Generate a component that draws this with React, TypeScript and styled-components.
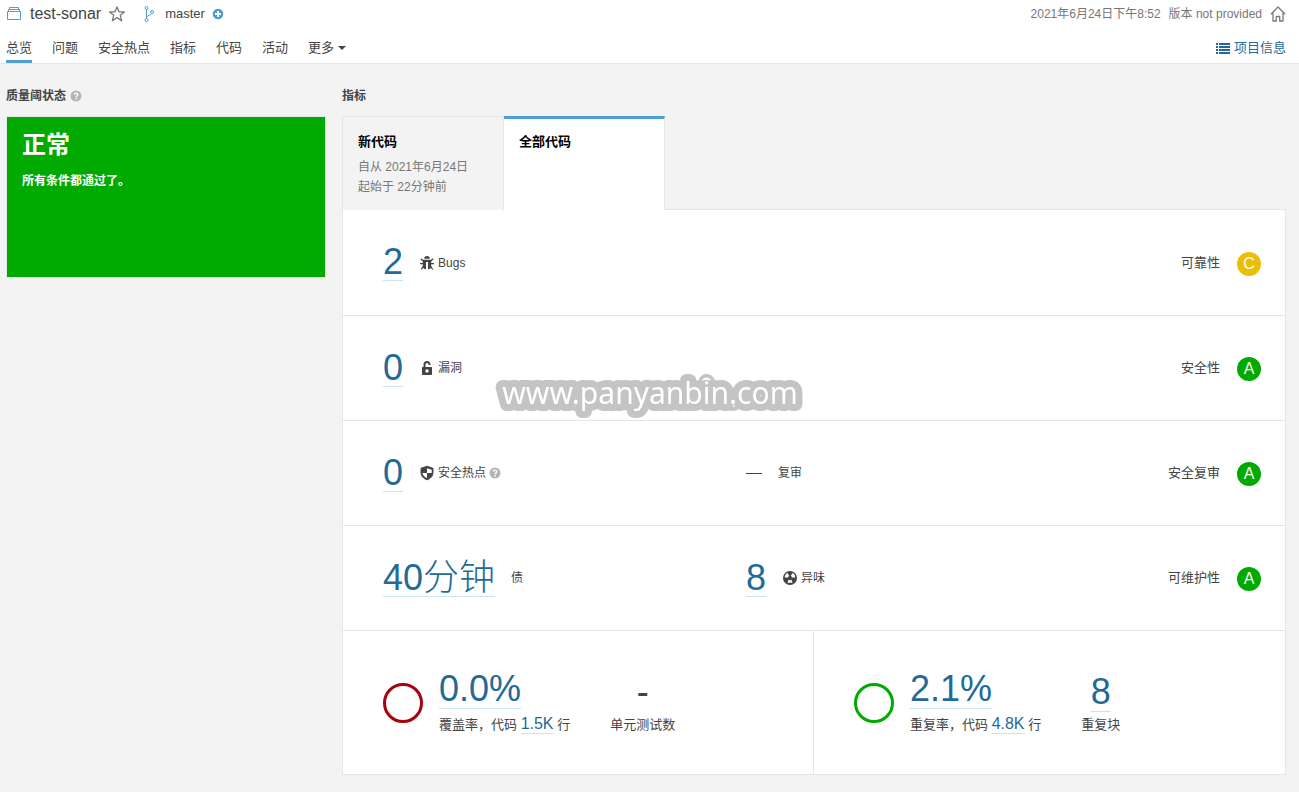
import React from 'react';
import styled, { createGlobalStyle } from 'styled-components';

const color = {
  text: '#444',
  muted: '#777',
  blue: '#4b9fd5',
  link: '#236a97',
  underline: '#cae3f2',
  border: '#e6e6e6',
  page: '#f3f3f3',
  green: '#00aa00',
  yellow: '#eabe06',
  red: '#a4030f',
  help: '#b4b4b4',
};

const Global = createGlobalStyle`
  *, *::before, *::after { box-sizing: border-box; }
  body {
    margin: 0;
    background: ${color.page};
    color: ${color.text};
    font: 13px/20px "Liberation Sans", "Noto Sans CJK SC", sans-serif;
  }
  svg { display: block; flex: none; }
  a { color: inherit; text-decoration: none; }
  h2, h3, p { margin: 0; }
  button { padding: 0; border: 0; background: none; color: inherit; font: inherit; cursor: pointer; text-align: left; }
`;

const Header = styled.header`
  background: #fff;
  border-bottom: 1px solid ${color.border};
  padding: 0 13px 0 6px;
`;

const HeaderRow = styled.div`
  display: flex;
  align-items: center;
  justify-content: space-between;
  height: 28px;
`;

const Project = styled.div`
  display: flex;
  align-items: center;
`;

const ProjectName = styled.a`
  margin: 0 8px;
  font-size: 16px;
`;

const Branch = styled.a`
  display: flex;
  align-items: center;
  gap: 8px;
  margin: 0 7px 0 16px;
`;

const Meta = styled.div`
  display: flex;
  align-items: center;
  gap: 8px;
  color: ${color.muted};
  font-size: 12px;
`;

const NavRow = styled.div`
  display: flex;
  justify-content: space-between;
  height: 35px;
`;

const Nav = styled.nav`
  display: flex;
  gap: 20px;
`;

const NavLink = styled.a<{ $active?: boolean }>`
  padding-top: 10px;
  border-bottom: 3px solid ${(p) => (p.$active ? color.blue : 'transparent')};
`;

const MoreButton = styled.button`
  display: flex;
  align-items: center;
  gap: 4px;
  height: 20px;
  margin-top: 10px;
`;

const InfoLink = styled.a`
  display: flex;
  align-items: center;
  gap: 4px;
  height: 20px;
  margin-top: 10px;
  color: ${color.link};
`;

const Main = styled.main`
  display: grid;
  grid-template-columns: 320px minmax(0, 1fr);
  gap: 16px;
  padding: 22px 13px 16px 6px;
`;

const Heading = styled.h2`
  display: flex;
  align-items: center;
  gap: 4px;
  margin-bottom: 10px;
  font-size: 12px;
  line-height: 20px;
  font-weight: bold;
`;

const Gate = styled.div`
  min-height: 162px;
  padding: 12px 15px;
  border: 1px solid ${color.border};
  background: ${color.green};
  color: #fff;
  font-size: 12px;
  font-weight: bold;
`;

const GateStatus = styled.h3`
  margin-bottom: 10px;
  font-size: 24px;
  line-height: 32px;
`;

const Tabs = styled.div`
  display: flex;
  position: relative;
  margin-bottom: -1px;
`;

const Tab = styled.button<{ $active?: boolean }>`
  display: flex;
  flex-direction: column;
  width: ${(p) => (p.$active ? '161px' : '162px')};
  height: 94px;
  padding: ${(p) => (p.$active ? '13px' : '15px')} 15px 0;
  border: 1px solid ${color.border};
  border-bottom: 0;
  ${(p) =>
    p.$active
      ? `background: #fff; border-top: 3px solid ${color.blue}; border-left: 0;`
      : `background: ${color.page};`}
  color: ${color.muted};
  font-size: 12px;
`;

const TabTitle = styled.span`
  margin-bottom: 5px;
  color: #000;
  font-size: 13px;
  font-weight: bold;
`;

const Panel = styled.div`
  border: 1px solid ${color.border};
  background: #fff;
`;

const MeasureRow = styled.div`
  display: grid;
  grid-template-columns: 363px minmax(0, 1fr) auto;
  align-items: center;
  height: 105px;
  padding: 0 24px 0 40px;
  border-bottom: 1px solid ${color.border};
  &:first-child { height: 106px; }
`;

const Measure = styled.div`
  display: flex;
  align-items: center;
  gap: 16px;
  font-size: 12px;
`;

const MeasureLabel = styled.span`
  display: flex;
  align-items: center;
  gap: 3px;
`;

const BigLink = styled.a`
  border-bottom: 1px solid ${color.underline};
  color: ${color.link};
  font-size: 36px;
  line-height: 36px;
  font-weight: 300;
`;

const BigText = styled.span`
  border-bottom: 1px solid transparent;
  font-size: 36px;
  line-height: 36px;
`;

const SmallLink = styled.a`
  display: inline-block;
  border-bottom: 1px solid ${color.underline};
  color: ${color.link};
  font-size: 16px;
  line-height: 18px;
`;

const Dash = styled.span`
  width: 16px;
  height: 1px;
  background: ${color.text};
`;

const Rating = styled.div`
  display: flex;
  align-items: flex-start;
  gap: 17px;
  grid-column: 3;
  padding-top: 2px;
  line-height: 22px;
`;

const RatingBadge = styled.a<{ $color: string }>`
  width: 24px;
  height: 24px;
  border-radius: 50%;
  background: ${(p) => p.$color};
  color: #fff;
  font-size: 16px;
  line-height: 24px;
  text-align: center;
`;

const Halves = styled.div`
  display: grid;
  grid-template-columns: 1fr 1fr;
`;

const Half = styled.div`
  display: flex;
  align-items: center;
  height: 143px;
  padding-left: 40px;
  &:first-child { border-right: 1px solid ${color.border}; }
`;

const Ring = styled.span<{ $color: string }>`
  flex: none;
  width: 40px;
  height: 40px;
  margin-right: 16px;
  border: 3px solid ${(p) => p.$color};
  border-radius: 50%;
`;

const Stat = styled.div<{ $center?: boolean }>`
  display: flex;
  flex-direction: column;
  align-items: ${(p) => (p.$center ? 'center' : 'flex-start')};
  gap: ${(p) => (p.$center ? '3px' : '6px')};
  margin-right: 40px;
  padding-top: ${(p) => (p.$center ? '2px' : '0')};
  white-space: nowrap;
  ${BigLink}, ${BigText} { line-height: 38px; }
`;

const Watermark = styled.div`
  position: fixed;
  inset: 0;
  display: flex;
  align-items: center;
  justify-content: center;
  pointer-events: none;
`;

const WatermarkText = styled.text`
  fill: #fff;
  stroke: #c4c4c4;
  stroke-width: 14px;
  stroke-linejoin: round;
  paint-order: stroke fill;
  font: 30px "Noto Sans", sans-serif;
  text-anchor: middle;
`;

const ProjectIcon = () => (
  <svg width="16" height="16" viewBox="0 0 16 16" fill="none" stroke={color.blue}>
    <path d="M1.500 5.500h13v8h-13zM2.500 5.500v-2h11v2M3.500 3.500v-2h9v2" />
  </svg>
);
const StarIcon = () => (
  <svg width="16" height="16" viewBox="0 0 16 16" fill="none" stroke={color.muted} strokeWidth="1.300" strokeLinejoin="round">
    <path d="M8 .9l2.100 5h5.200l-4.100 3.300 1.500 5.600L8 11.600l-4.700 3.200 1.500-5.600L.7 5.900h5.200z" />
  </svg>
);
const BranchIcon = () => (
  <svg width="16" height="16" viewBox="0 0 16 16" fill="none" stroke={color.blue}>
    <circle cx="5.500" cy="2" r="1.500" />
    <circle cx="5.500" cy="14" r="1.500" />
    <circle cx="11" cy="6" r="1.500" />
    <path d="M5.500 3.500v9M10.500 7.500c-.5 2-4.500 1.500-5 4" />
  </svg>
);
const PlusIcon = () => (
  <svg width="12" height="12" viewBox="0 0 12 12">
    <circle cx="6" cy="6" r="5.300" fill={color.blue} />
    <path d="M6 3v6M3 6h6" stroke="#fff" strokeWidth="2" />
  </svg>
);
const HomeIcon = () => (
  <svg width="16" height="16" viewBox="0 0 16 16" fill="none" stroke={color.muted} strokeWidth="1.300" strokeLinejoin="round">
    <path d="M.9 8.200L8 1l7.100 7.200M3 7v8h3.300v-4.500h3.400V15H13V7" />
  </svg>
);
const ListIcon = () => (
  <svg width="14" height="12" viewBox="0 0 14 12" fill={color.link}>
    <path d="M0 1h2v2H0zM3 1h11v2H3zM0 4h2v2H0zM3 4h11v2H3zM0 7h2v2H0zM3 7h11v2H3zM0 10h2v2H0zM3 10h11v2H3z" />
  </svg>
);
const CaretIcon = () => (
  <svg width="8" height="4" viewBox="0 0 8 4" fill={color.text}>
    <path d="M0 0h8L4 4z" />
  </svg>
);
const HelpIcon = () => (
  <svg width="12" height="12" viewBox="0 0 12 12">
    <circle cx="6" cy="6" r="5.500" fill={color.help} />
    <path d="M4.300 4.700c0-2.200 3.500-2.100 3.500-.1C7.800 5.900 6.100 5.900 6.100 7.200M6.100 8.100v1.400" fill="none" stroke="#fff" strokeWidth="1.400" />
  </svg>
);
const BugIcon = () => (
  <svg width="16" height="16" viewBox="0 0 16 16">
    <path d="M5.200 3.700a2.800 2.700 0 0 1 5.600 0zM3.800 4.700h8.400v7.300c-.5 1.500-1.600 2.100-3.200 2.400V7H7v7.400c-1.600-.3-2.700-.9-3.200-2.400z" fill={color.text} />
    <path d="M4.300 6L1.800 3.700M11.700 6l2.500-2.300M4.300 8.600H1M11.700 8.600H15M4.300 11.500l-2 3M11.700 11.500l2 3" fill="none" stroke={color.text} strokeWidth="1.300" />
  </svg>
);
const LockIcon = () => (
  <svg width="16" height="16" viewBox="0 0 16 16">
    <path d="M5.500 8V4.500a2.500 2.500 0 0 1 5 0V5" fill="none" stroke={color.text} strokeWidth="2" />
    <path fillRule="evenodd" fill={color.text} d="M3.600 7h8.800a.7.7 0 0 1 .6.700v6.600a.7.7 0 0 1-.6.700H3.600a.7.7 0 0 1-.6-.7V7.700a.7.7 0 0 1 .6-.7zM8 9.300a1.700 1.700 0 1 0 0 3.400 1.700 1.700 0 0 0 0-3.400z" />
  </svg>
);
const ShieldIcon = () => (
  <svg width="16" height="16" viewBox="0 0 16 16">
    <path d="M8 1.200l6 2.100v4c0 3.700-2.400 6.300-6 7.500-3.600-1.200-6-3.800-6-7.500v-4z" fill={color.text} stroke={color.text} strokeLinejoin="round" />
    <path d="M8 3.200V8h4.600c.2-.9.200-2 .1-3.200zM8 8H3.400C3.900 10.400 5.500 12 8 13.100z" fill="#fff" />
  </svg>
);
const SmellIcon = () => (
  <svg width="16" height="16" viewBox="0 0 16 16">
    <circle cx="8" cy="8" r="7" fill={color.text} />
    <path d="M5.400 3.200h5.200L9.300 6.400a2 2 0 0 0-2.600 0zM2.700 8.400h3.500a2 2 0 0 0 1 1.800l-1.900 3A5.700 5.700 0 0 1 2.700 8.400zM13.300 8.400H9.800a2 2 0 0 1-1 1.800l1.900 3a5.700 5.700 0 0 0 2.600-4.800z" fill="#fff" transform="rotate(180 8 8)" />
    <circle cx="8" cy="8" r="1.100" fill={color.text} />
  </svg>
);

const RatingCell = ({ label, grade, tone }: { label: string; grade: string; tone: string }) => (
  <Rating>
    <span>{label}</span>
    <RatingBadge href="#" $color={tone}>{grade}</RatingBadge>
  </Rating>
);

const MeasureCell = ({ value, label, icon, help }: { value: string; label: string; icon?: React.ReactNode; help?: boolean }) => (
  <Measure>
    <BigLink href="#">{value}</BigLink>
    <MeasureLabel>
      {icon}
      {label}
      {help && <HelpIcon />}
    </MeasureLabel>
  </Measure>
);

const navItems = ['总览', '问题', '安全热点', '指标', '代码', '活动'];

export default function App() {
  return (
    <>
      <Global />
      <Header>
        <HeaderRow>
          <Project>
            <ProjectIcon />
            <ProjectName href="#">test-sonar</ProjectName>
            <button aria-label="收藏"><StarIcon /></button>
            <Branch href="#">
              <BranchIcon />
              master
            </Branch>
            <button aria-label="添加分支"><PlusIcon /></button>
          </Project>
          <Meta>
            <time>2021年6月24日下午8:52</time>
            <span>版本 not provided</span>
            <button aria-label="设为首页"><HomeIcon /></button>
          </Meta>
        </HeaderRow>
        <NavRow>
          <Nav>
            {navItems.map((item, i) => (
              <NavLink key={item} href="#" $active={i === 0}>{item}</NavLink>
            ))}
            <MoreButton>
              更多
              <CaretIcon />
            </MoreButton>
          </Nav>
          <InfoLink href="#">
            <ListIcon />
            项目信息
          </InfoLink>
        </NavRow>
      </Header>
      <Main>
        <section>
          <Heading>质量阈状态 <HelpIcon /></Heading>
          <Gate>
            <GateStatus>正常</GateStatus>
            <p>所有条件都通过了。</p>
          </Gate>
        </section>
        <section>
          <Heading>指标</Heading>
          <Tabs role="tablist">
            <Tab role="tab" aria-selected={false}>
              <TabTitle>新代码</TabTitle>
              <span>自从 2021年6月24日</span>
              <span>起始于 22分钟前</span>
            </Tab>
            <Tab role="tab" aria-selected $active>
              <TabTitle>全部代码</TabTitle>
            </Tab>
          </Tabs>
          <Panel role="tabpanel">
            <MeasureRow>
              <MeasureCell value="2" label="Bugs" icon={<BugIcon />} />
              <RatingCell label="可靠性" grade="C" tone={color.yellow} />
            </MeasureRow>
            <MeasureRow>
              <MeasureCell value="0" label="漏洞" icon={<LockIcon />} />
              <RatingCell label="安全性" grade="A" tone={color.green} />
            </MeasureRow>
            <MeasureRow>
              <MeasureCell value="0" label="安全热点" icon={<ShieldIcon />} help />
              <Measure>
                <Dash />
                复审
              </Measure>
              <RatingCell label="安全复审" grade="A" tone={color.green} />
            </MeasureRow>
            <MeasureRow>
              <MeasureCell value="40分钟" label="债" />
              <MeasureCell value="8" label="异味" icon={<SmellIcon />} />
              <RatingCell label="可维护性" grade="A" tone={color.green} />
            </MeasureRow>
            <Halves>
              <Half>
                <Ring $color={color.red} />
                <Stat>
                  <BigLink href="#">0.0%</BigLink>
                  <span>覆盖率，代码 <SmallLink href="#">1.5K</SmallLink> 行</span>
                </Stat>
                <Stat $center>
                  <BigText>-</BigText>
                  <span>单元测试数</span>
                </Stat>
              </Half>
              <Half>
                <Ring $color={color.green} />
                <Stat>
                  <BigLink href="#">2.1%</BigLink>
                  <span>重复率，代码 <SmallLink href="#">4.8K</SmallLink> 行</span>
                </Stat>
                <Stat $center>
                  <BigLink href="#">8</BigLink>
                  <span>重复块</span>
                </Stat>
              </Half>
            </Halves>
          </Panel>
        </section>
      </Main>
      <Watermark>
        <svg width="320" height="52" viewBox="0 0 320 52">
          <WatermarkText x="160" y="34">www.panyanbin.com</WatermarkText>
        </svg>
      </Watermark>
    </>
  );
}
